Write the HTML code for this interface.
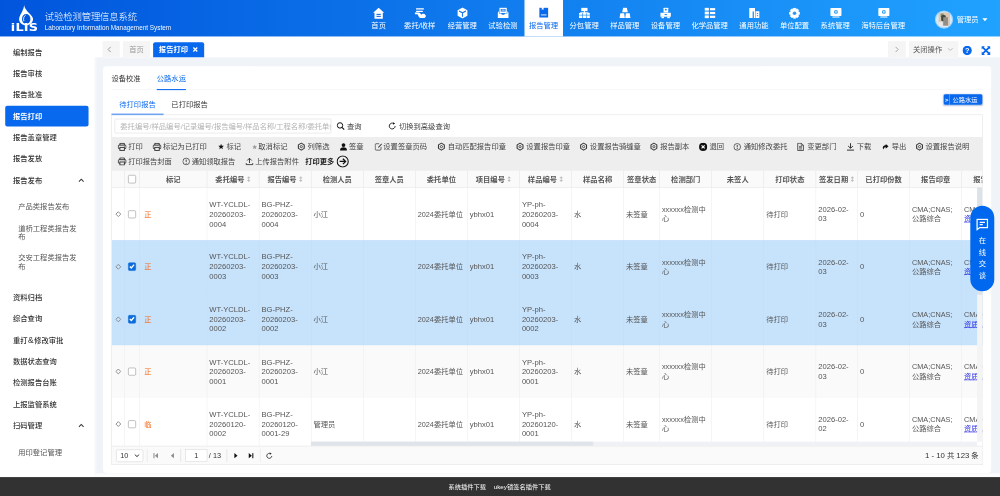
<!DOCTYPE html>
<html lang="zh-CN"><head><meta charset="utf-8"><title>试验检测管理信息系统</title>
<style>
*{box-sizing:border-box;margin:0;padding:0}
html,body{width:1000px;height:496px;overflow:hidden;background:#f0f4f9}
body{font-family:"Liberation Sans","Noto Sans CJK SC",sans-serif;font-size:14px;color:#333}
#app{position:absolute;left:0;top:0;width:1920px;height:960px;transform:scale(0.5208333) translateZ(0);transform-origin:0 0;overflow:hidden}
svg{display:block}
/* header */
.hdr{position:absolute;left:0;top:0;width:1920px;height:70px;z-index:3;background:linear-gradient(90deg,#0055dc 0%,#20a2ff 100%)}
.logo{position:absolute;left:20px;top:8px;width:54px;height:56px}
.logo .t{position:absolute;left:-4px;top:32px;width:62px;text-align:center;font-family:"DejaVu Sans","Liberation Sans",sans-serif;font-weight:bold;font-size:23px;line-height:24px;color:#fff;letter-spacing:0.3px;transform:scale(1.07,0.9);transform-origin:50% 100%}
.logo svg{position:absolute;left:0;top:0}
.ttl{position:absolute;left:86px;top:20px;color:#fff;font-size:18px;line-height:24px;white-space:nowrap;letter-spacing:-0.3px;font-weight:300}
.sub{position:absolute;left:86px;top:46px;color:#fff;font-size:12.25px;line-height:16px;white-space:nowrap;opacity:.95}
.nav{position:absolute;left:691px;top:0;height:70px;display:flex}
.ni{height:70px;position:relative;color:#fff;font-size:14px;text-align:center;white-space:nowrap}
.ni .bg{position:absolute;left:2px;right:2px;top:0;bottom:0}
.ni.on .bg{background:#fff}
.ni.on{color:#0868ee}
.ni svg{position:absolute;left:50%;margin-left:-11px;top:14px}
.ni span{position:absolute;left:0;right:0;top:39px;line-height:20px}
.user{position:absolute;left:1795px;top:20px;width:35px;height:35px;border-radius:50%;border:2px solid #9bd2ff;background:#d9ecff;overflow:hidden}
.user i{position:absolute;display:block}
.uname{position:absolute;left:1837px;top:27px;color:#fff;font-size:14px;line-height:20px;white-space:nowrap}
.ucar{position:absolute;left:1886px;top:35px;width:0;height:0;border-left:5px solid transparent;border-right:5px solid transparent;border-top:6px solid #fff}
/* sidebar */
.side{position:absolute;left:0;top:70px;width:180px;height:846px;background:#fff;padding:10px 10px 0 10px;box-shadow:2px 0 5px rgba(255,255,255,.95)}
.si{height:40px;margin-bottom:1px;line-height:40px;padding-left:15px;font-size:14px;font-weight:500;color:#333;border-radius:4px;position:relative;white-space:nowrap}
.si.on{background:#0868ee;color:#fff;font-weight:bold}
.si .chev{position:absolute;left:140px;top:15px}
.sub1{padding:10px 0 19.4px 0}
.ss{min-height:40px;margin-bottom:1px;padding:12px 20px 12px 25px;line-height:16px;font-size:14px;color:#555;font-weight:normal}
/* tabs bar */
.tbar{position:absolute;left:180px;top:70px;width:1740px;height:40px;background:#fff}
.tb{position:absolute;top:9px;height:31px;line-height:31px;text-align:center;background:#f5f5f5;color:#999;font-size:14px;white-space:nowrap}
.tb.on{background:#0868ee;color:#fff;font-weight:bold;border-radius:4px 4px 0 0}
/* panel */
.panel{position:absolute;left:198px;top:127px;width:1705px;height:781px;background:#fff;border-radius:6px}
.t1{position:absolute;left:16px;right:16px;top:0;height:46px;border-bottom:1px solid #eef0f3}
.t1 div{position:absolute;top:12px;line-height:22px;font-size:14px;color:#333;white-space:nowrap}
.t1 div.on{color:#0868ee}
.t1 i{position:absolute;left:87px;width:56px;top:44px;height:2px;background:#0868ee}
.t2{position:absolute;left:16px;right:16px;top:54px;height:40px;border-bottom:1px solid #dcdfe4}
.t2 div{position:absolute;top:0;height:40px;line-height:40px;width:100px;text-align:center;font-size:14px;color:#333}
.t2 div.on{color:#0868ee;border-bottom:3px solid #6ea3f2}
.corner{position:absolute;left:1614px;top:54px;width:74px;height:20px;box-shadow:0 1px 3px rgba(0,60,160,.3);background:#0868ee;border-radius:3px;color:#fff;font-size:12px;line-height:20px;white-space:nowrap}
.corner b{position:absolute;left:0;top:0;width:12px;text-align:center;font-weight:bold;font-size:11px;border-right:1px solid #9fc0f5;height:20px}
.corner span{position:absolute;left:17px;top:0}
.box{position:absolute;left:16px;top:94px;width:1673px;height:671px;border:1px solid #dfdfdf;border-top:none;overflow:hidden}

.hdr,.tbar,.tb,.panel,.foot,.pg,.pg .sel,.pg .inp,.pg .tx,.srch,.tool,.th,.t1,.t2,.box,.sb,.bt,.nav,.ni{box-shadow:0 0 1px rgba(255,255,255,.02)}
/* footer */
.foot{position:absolute;left:0;top:916px;width:1920px;height:44px;background:#323232;color:#fff;font-size:12px;line-height:36px;white-space:nowrap}
.foot span{position:absolute;top:0}
/* chat */
.chat{position:absolute;left:1863px;top:395px;width:46px;height:164px;border-radius:23px;background:#0068ee;color:#fff;font-size:14px;text-align:center}
.chat svg{position:absolute;left:11px;top:24px}
.chat span{position:absolute;left:0;width:46px;line-height:22px}

.srch{position:absolute;left:5px;top:7px;width:416px;height:28px;border:1px solid #d9d9d9;border-radius:2px;background:#fff;overflow:hidden;white-space:nowrap;color:#b3b3b3;font-size:14px;line-height:26px;padding-left:10px}
.sb{position:absolute;top:6px;height:30px;line-height:30px;font-size:14px;color:#444;white-space:nowrap}
.sb svg{position:absolute;left:0;top:7px}
.tool{position:absolute;left:0;top:42px;width:1673px;height:65px;background:#eeeeee}
.bt{position:absolute;height:29px;line-height:29px;font-size:14px;color:#444;white-space:nowrap;padding-left:20px}
.bt svg{position:absolute;left:0;top:6px}
.th{position:absolute;left:0;top:107px;height:32px;background:#fafafa;border-bottom:1px solid #e2e2e2}
.th div{position:absolute;top:0;height:32px;line-height:33.4px;text-align:center;font-size:14px;font-weight:bold;color:#555;border-right:1px solid #e2e2e2;white-space:nowrap;overflow:hidden}
.th div svg{display:inline-block;vertical-align:-1px;margin-left:3px}
.row{position:absolute;left:0;width:1673px;height:101.5px;background:#fff}
.row.alt{background:#fafafa}
.row.sel{background:#c7e3fc}
.c{position:absolute;top:0;height:100%;border-right:1px solid #ececec;padding:0 4px 0 4px;font-size:14px;line-height:18.4px;color:#555;display:flex;align-items:center;overflow:hidden}
.row.sel .c{border-right-color:#c0ddf6}
.c p{width:100%}
.c p.l{font-size:14.6px}
.ck{width:15.6px;height:15.6px;border:1.5px solid #8c8c8c;border-radius:2.6px;background:#fff}
.ck.on{background:#0c6cd9;border-color:#0c6cd9;position:relative}
.lnk{color:#2b2ee6;text-decoration:underline}
.pg{position:absolute;left:0;top:635px;width:1673px;height:36px;background:#fafafa;border-top:1px solid #e2e2e2}
.pg .sel{position:absolute;left:8px;top:6px;width:52px;height:24px;border:1px solid #d5d5d5;border-radius:3px;background:#fff;font-size:14px;line-height:22px;padding-left:7px;color:#333}
.pg .sp{position:absolute;top:5px;width:1px;height:25px;background:#dedede;border-right:1px solid #fff;box-sizing:content-box}
.pg .inp{position:absolute;left:141px;top:6px;width:42px;height:24px;border:1px solid #d5d5d5;background:#fff;font-size:14px;line-height:22px;text-align:center;color:#333}
.pg .tx{position:absolute;top:6px;line-height:24px;font-size:14px;color:#333;white-space:nowrap}
.pg svg{position:absolute}
.hs{position:absolute;left:382px;top:627px;width:1279px;height:8px;background:#eff1f7}
.hs i{position:absolute;left:0;top:0;width:542px;height:8px;background:#dfe4ea}
.vs{position:absolute;left:1661px;top:139px;width:11px;height:488px;background:#f4f4f4}
.vs i{position:absolute;left:0;top:0;width:11px;height:206px;background:#dde2e8}
</style></head><body><div id="app">
<div class="hdr">
<div class="logo"><svg width="54" height="56" viewBox="0 0 54 56"><path d="M26.3 1.4 C26.8 6 29.4 9.4 32 12.9 C36.4 18.4 43.4 22.4 43.4 28.6 C43.4 35.6 37.5 40.6 30 40.6 C22.5 40.6 16.6 35.6 16.6 28.6 C16.6 22.4 21.4 17.6 23 12.9 C24.6 9 25.9 6 26.3 1.4 Z" fill="#fff"/><ellipse cx="30.3" cy="28.6" rx="8.1" ry="9.6" fill="#0257dd"/><path d="M25.6 32 C24.4 27.4 25.6 23.4 28.6 21.6" stroke="#fff" stroke-width="1.7" fill="none" stroke-linecap="round"/></svg><div class="t">iLIS</div></div>
<div class="ttl">试验检测管理信息系统</div>
<div class="sub">Laboratory Information Management System</div>
<div class="nav">
<div class="ni" style="width:72px"><div class="bg"></div><svg width="22" height="23" viewBox="0 0 22 23" style="top:13.5px"><path d="M11 0.8 L21.6 10.6 H19 V21.8 H3 V10.6 H0.4 Z" fill="#fff"/><rect x="6.8" y="12.6" width="8.4" height="2" fill="#0966e3"/><rect x="6.8" y="16.4" width="8.4" height="2" fill="#0966e3"/></svg><span>首页</span></div>
<div class="ni" style="width:85.6px"><div class="bg"></div><svg width="24" height="22" viewBox="0 0 24 22"><rect x="3.6" y="1.6" width="15.4" height="2.6" rx="1" fill="#fff"/><rect x="3.6" y="6.4" width="13.6" height="2.4" rx="1" fill="#fff"/><path d="M1.6 10.2 H8 C10.4 10.2 11.6 11 12.6 12.6 L13.8 14.4 C14.6 12.8 16.2 12 18.2 12.4 C20.8 13 22.9 14.9 22.6 17.1 C22.3 19.5 20 20.6 17.5 20.6 H13.4 C10.8 20.6 9.6 19.2 8.6 17.2 L7.2 14.4 C6.7 13.5 6.2 13.3 5.2 13.3 H1.6 Z" fill="#fff"/></svg><span>委托/收样</span></div>
<div class="ni" style="width:78px"><div class="bg"></div><svg width="22" height="22" viewBox="0 0 22 22"><path d="M11 0.5 L20.4 5.6 V16.4 L11 21.5 L1.6 16.4 V5.6 Z" fill="#fff"/><path d="M5.2 7.4 L11 10.6 L16.8 7.4 M11 10.6 V17.4" stroke="#1474e9" stroke-width="2.2" fill="none" stroke-linecap="round"/></svg><span>经营管理</span></div>
<div class="ni" style="width:78px"><div class="bg"></div><svg width="22" height="22" viewBox="0 0 22 22"><path d="M4 1 H18 V11 H4 Z" fill="#fff"/><rect x="6.4" y="3.2" width="9.2" height="5" fill="#1979ea"/><rect x="8" y="4.6" width="6" height="1.6" fill="#fff"/><path d="M0.6 10.6 L3 7 V12 H7.4 C7.4 15.4 14.6 15.4 14.6 12 H19 V7 L21.4 10.6 V20.4 H0.6 Z" fill="#fff"/></svg><span>试验检测</span></div>
<div class="ni on" style="width:78px"><div class="bg"></div><svg width="22" height="22" viewBox="0 0 22 22"><path d="M2.6 0.8 H7.2 V5 L8.9 3.8 L10.6 5 V0.8 H19.4 V19.6 H2.6 Z" fill="#0868ee"/><rect x="5.6" y="13.8" width="10.8" height="1.7" fill="#fff"/></svg><span>报告管理</span></div>
<div class="ni" style="width:78px"><div class="bg"></div><svg width="22" height="22" viewBox="0 0 22 22"><rect x="5" y="1" width="12" height="6.4" fill="#fff"/><rect x="10" y="7" width="2" height="4" fill="#fff"/><rect x="3" y="9.6" width="16" height="1.8" fill="#fff"/><rect x="0.6" y="11" width="6.2" height="9.6" fill="#fff"/><rect x="7.9" y="11" width="6.2" height="9.6" fill="#fff"/><rect x="15.2" y="11" width="6.2" height="9.6" fill="#fff"/><rect x="0.6" y="14.4" width="21" height="1.2" fill="#1e84ee"/></svg><span>分包管理</span></div>
<div class="ni" style="width:78px"><div class="bg"></div><svg width="22" height="22" viewBox="0 0 22 22"><path d="M7.4 1 H14.6 L16.4 9.6 H5.6 Z" fill="#fff"/><path d="M2 11.2 H9.4 L10.6 20.6 H0.4 Z M12.6 11.2 H20 L21.6 20.6 H11.4 Z" fill="#fff"/></svg><span>样品管理</span></div>
<div class="ni" style="width:78px"><div class="bg"></div><svg width="22" height="22" viewBox="0 0 22 22"><rect x="7" y="1" width="9" height="9" rx="1" fill="#fff"/><rect x="9.6" y="3" width="3.6" height="3" fill="#238cf0"/><path d="M1 10.4 H21 V18 H1 Z" fill="#fff"/><rect x="3" y="18" width="5" height="3" fill="#fff"/><rect x="14" y="18" width="5" height="3" fill="#fff"/><rect x="9" y="13" width="5" height="2" fill="#238cf0"/></svg><span>设备管理</span></div>
<div class="ni" style="width:92px"><div class="bg"></div><svg width="22" height="22" viewBox="0 0 22 22"><rect x="1" y="1" width="8" height="5.4" fill="#fff"/><rect x="11" y="1.6" width="10.4" height="4.2" fill="#fff"/><rect x="1" y="8.3" width="8" height="5.4" fill="#fff"/><rect x="11" y="8.9" width="10.4" height="4.2" fill="#fff"/><rect x="1" y="15.6" width="8" height="5.4" fill="#fff"/><rect x="11" y="16.2" width="10.4" height="4.2" fill="#fff"/></svg><span>化学品管理</span></div>
<div class="ni" style="width:78px"><div class="bg"></div><svg width="22" height="22" viewBox="0 0 22 22"><path d="M1.6 1.4 H12.6 V20.8 H1.6 Z" fill="#fff"/><path d="M13.6 7.4 H21 V20.8 H13.6 Z" fill="#fff"/><rect x="8" y="8" width="2.6" height="12.8" fill="#2996f4"/><rect x="16" y="11" width="2.6" height="2" fill="#2996f4"/><rect x="16" y="15" width="2.6" height="2" fill="#2996f4"/></svg><span>通用功能</span></div>
<div class="ni" style="width:78px"><div class="bg"></div><svg width="21" height="21" viewBox="0 0 22 22" style="margin-left:-10.5px;top:14.5px"><path d="M9 0.6 H13 L13.8 3.4 L16.4 2 L19.4 5 L18 7.8 L21.2 9 V13 L18 14.2 L19.4 17 L16.4 20 L13.8 18.6 L13 21.4 H9 L8.2 18.6 L5.6 20 L2.6 17 L4 14.2 L0.8 13 V9 L4 7.8 L2.6 5 L5.6 2 L8.2 3.4 Z" fill="#fff" stroke="#fff" stroke-width="1.4" stroke-linejoin="round"/><circle cx="11" cy="11" r="3.6" fill="#2b9af6"/></svg><span>单位配置</span></div>
<div class="ni" style="width:78px"><div class="bg"></div><svg width="24" height="22" viewBox="0 0 24 22"><rect x="1.4" y="1.4" width="21.2" height="15.4" rx="1.4" fill="#fff"/><circle cx="12" cy="8.8" r="3.7" fill="#2e9ef8"/><circle cx="12" cy="8.8" r="1.5" fill="#fff"/><rect x="5" y="17.8" width="14" height="2" rx="0.6" fill="#fff"/></svg><span>系统管理</span></div>
<div class="ni" style="width:106px"><div class="bg"></div><svg width="24" height="22" viewBox="0 0 24 22"><rect x="1.4" y="1.4" width="21.2" height="15.4" rx="1.4" fill="#fff"/><circle cx="12" cy="8.8" r="3.7" fill="#2e9ef8"/><circle cx="12" cy="8.8" r="1.5" fill="#fff"/><rect x="5" y="17.8" width="14" height="2" rx="0.6" fill="#fff"/></svg><span>海特后台管理</span></div>
</div>
<div class="user"><i style="left:4.5px;top:2px;width:22px;height:26px;background:#dac8b0"></i><i style="left:9px;top:4px;width:6px;height:7px;background:#7f927b"></i><i style="left:10px;top:7px;width:9px;height:12px;background:#414a40;border-radius:3px"></i><i style="left:14px;top:11px;width:9px;height:16px;background:#918d88"></i><i style="left:5px;top:20px;width:8px;height:8px;background:#e6eaee"></i></div><div class="uname">管理员</div><div class="ucar"></div>
</div>
<div class="side">
<div class="si">编制报告</div>
<div class="si">报告审核</div>
<div class="si">报告批准</div>
<div class="si on">报告打印</div>
<div class="si">报告盖章管理</div>
<div class="si">报告发放</div>
<div class="si">报告发布<svg class="chev" width="12" height="10" viewBox="0 0 12 10"><path d="M1.5 7.5 L6 3 L10.5 7.5" stroke="#333" stroke-width="2" fill="none"/></svg></div>
<div class="sub1"><div class="ss">产品类报告发布</div><div class="ss">道桥工程类报告发布</div><div class="ss">交安工程类报告发布</div></div>
<div class="si">资料归档</div>
<div class="si">综合查询</div>
<div class="si">重打<span style="font-size:16px;padding:0 1px">&amp;</span>修改审批</div>
<div class="si">数据状态查询</div>
<div class="si">检测报告台账</div>
<div class="si">上报监管系统</div>
<div class="si">扫码管理<svg class="chev" width="12" height="10" viewBox="0 0 12 10"><path d="M1.5 7.5 L6 3 L10.5 7.5" stroke="#333" stroke-width="2" fill="none"/></svg></div>
<div class="sub1"><div class="ss">用印登记管理</div></div>
</div>
<div class="tbar">
<div class="tb" style="left:17px;width:33px"><svg style="margin:10px 0 0 9px" width="8" height="12" viewBox="0 0 8 12"><path d="M6.5 1 L1.5 6 L6.5 11" stroke="#8a8a8a" stroke-width="1.7" fill="none"/></svg></div>
<div class="tb" style="left:56px;width:52px">首页</div>
<div class="tb on" style="left:114px;width:98px;top:10.5px;height:29.5px;line-height:28px"><span style="position:absolute;left:11px;top:0">报告打印</span><svg style="position:absolute;left:76px;top:9.5px" width="10" height="10" viewBox="0 0 10 10"><path d="M1.2 1.2 L8.8 8.8 M8.8 1.2 L1.2 8.8" stroke="#fff" stroke-width="2.6"/></svg></div>
<div class="tb" style="left:1525px;width:34px"><svg style="margin:10px auto 0" width="8" height="12" viewBox="0 0 8 12"><path d="M1.5 1 L6.5 6 L1.5 11" stroke="#999" stroke-width="1.6" fill="none"/></svg></div>
<div class="tb" style="left:1565px;width:95px;color:#555"><span style="position:absolute;left:8px;top:0">关闭操作</span><svg style="position:absolute;left:74px;top:12px" width="11" height="8" viewBox="0 0 11 8"><path d="M1 1.5 L5.5 6 L10 1.5" stroke="#aaa" stroke-width="1.4" fill="none"/></svg></div>
<svg style="position:absolute;left:1668px;top:17.5px" width="18" height="18" viewBox="0 0 18 18"><circle cx="9" cy="9" r="9" fill="#0868ee"/><text x="9" y="13.8" text-anchor="middle" font-family="Liberation Sans,sans-serif" font-weight="bold" font-size="14" fill="#fff">?</text></svg>
<svg style="position:absolute;left:1704px;top:17.5px" width="18" height="18" viewBox="0 0 18 18"><path d="M0.6 0.6 H7 L5 2.6 L9 6.6 L13 2.6 L11 0.6 H17.4 V7 L15.4 5 L11.4 9 L15.4 13 L17.4 11 V17.4 H11 L13 15.4 L9 11.4 L5 15.4 L7 17.4 H0.6 V11 L2.6 13 L6.6 9 L2.6 5 L0.6 7 Z" fill="#0868ee"/></svg>
</div>
<div class="panel">
<div class="t1"><div style="left:0">设备校准</div><div class="on" style="left:87px">公路水运</div><i></i></div>
<div class="t2"><div class="on" style="left:0">待打印报告</div><div style="left:100px">已打印报告</div></div>
<div class="corner"><b>&gt;</b><span>公路水运</span></div>
<div class="box"><div class="srch">委托编号/样品编号/记录编号/报告编号/样品名称/工程名称/委托单位/检测人员</div>
<div class="sb" style="left:431px;padding-left:20px"><svg width="16" height="16" viewBox="0 0 16 16"><circle cx="6.8" cy="6.8" r="5.2" fill="none" stroke="#111" stroke-width="1.9"/><path d="M10.6 10.6 L15 15" stroke="#111" stroke-width="2.2"/></svg>查询</div>
<div class="sb" style="left:530px;padding-left:21px"><svg width="16" height="16" viewBox="0 0 16 16"><path d="M13.6 8 A5.6 5.6 0 1 1 11.2 3.4" fill="none" stroke="#111" stroke-width="1.7"/><path d="M9.4 0.6 L13.6 3 L9.8 5.6 Z" fill="#111"/></svg>切换到高级查询</div>
<div class="tool">
<div class="bt" style="left:11px;top:4.5px;padding-left:20px;"><svg width="17" height="16" viewBox="0 0 17 16"><path d="M4.2 4.6 V1.2 H12.8 V4.6" fill="none" stroke="#333" stroke-width="1.8"/><rect x="1" y="4.6" width="15" height="6.8" rx="1.8" fill="none" stroke="#333" stroke-width="1.9"/><rect x="4.2" y="9" width="8.6" height="5.8" fill="#eeeeee" stroke="#333" stroke-width="1.8"/><circle cx="13.3" cy="7" r="0.9" fill="#333"/></svg>打印</div>
<div class="bt" style="left:78px;top:4.5px;padding-left:20px;"><svg width="17" height="16" viewBox="0 0 17 16"><path d="M4.2 4.6 V1.2 H12.8 V4.6" fill="none" stroke="#333" stroke-width="1.8"/><rect x="1" y="4.6" width="15" height="6.8" rx="1.8" fill="none" stroke="#333" stroke-width="1.9"/><rect x="4.2" y="9" width="8.6" height="5.8" fill="#eeeeee" stroke="#333" stroke-width="1.8"/><circle cx="13.3" cy="7" r="0.9" fill="#333"/></svg>标记为已打印</div>
<div class="bt" style="left:203px;top:4.5px;padding-left:17px;"><svg width="13" height="14.9" viewBox="0 0 14 16" style="top:6.6px"><path d="M7 2.2 L8.6 6.2 L12.8 6.5 L9.6 9.2 L10.6 13.4 L7 11.1 L3.4 13.4 L4.4 9.2 L1.2 6.5 L5.4 6.2 Z" fill="#111"/></svg>标记</div>
<div class="bt" style="left:268px;top:4.5px;padding-left:13px;"><svg width="12" height="16" viewBox="0 0 12 16"><path d="M6 3.4 L7.3 6.6 L10.8 6.9 L8.1 9.1 L9 12.6 L6 10.7 L3 12.6 L3.9 9.1 L1.2 6.9 L4.7 6.6 Z" fill="#9a9a9a"/></svg>取消标记</div>
<div class="bt" style="left:355.5px;top:4.5px;padding-left:20px;"><svg width="17" height="17" viewBox="0 0 16 16" style="left:-0.5px;top:5.5px"><path d="M8.00 1.70 L2.72 4.85 L2.72 11.15 L8.00 14.30 L13.28 11.15 L13.28 4.85 Z" fill="none" stroke="#3a3a3a" stroke-width="2" stroke-linejoin="round"/><circle cx="8" cy="8" r="2" fill="none" stroke="#3a3a3a" stroke-width="1.5"/></svg>列筛选</div>
<div class="bt" style="left:437px;top:4.5px;padding-left:18px;"><svg width="15" height="16" viewBox="0 0 15 16"><circle cx="7.5" cy="4.6" r="3.6" fill="#111"/><path d="M0.8 15 C0.8 10.6 3.4 8.8 7.5 8.8 C11.6 8.8 14.2 10.6 14.2 15 Z" fill="#111"/></svg>签章</div>
<div class="bt" style="left:504px;top:4.5px;padding-left:17px;"><svg width="15" height="16" viewBox="0 0 15 16"><path d="M9 2 H3 C2 2 1.4 2.6 1.4 3.6 V12.6 C1.4 13.6 2 14.2 3 14.2 H11 C12 14.2 12.6 13.6 12.6 12.6 V8" fill="none" stroke="#333" stroke-width="1.4"/><path d="M13.4 1.6 L7.4 7.8 L6.6 9.8 L8.6 9 L14.4 2.8 Z" fill="#333"/></svg>设置签章页码</div>
<div class="bt" style="left:624.5px;top:4.5px;padding-left:20px;"><svg width="17" height="17" viewBox="0 0 16 16" style="left:-0.5px;top:5.5px"><path d="M8.00 1.70 L2.72 4.85 L2.72 11.15 L8.00 14.30 L13.28 11.15 L13.28 4.85 Z" fill="none" stroke="#3a3a3a" stroke-width="2" stroke-linejoin="round"/><circle cx="8" cy="8" r="2" fill="none" stroke="#3a3a3a" stroke-width="1.5"/></svg>自动匹配报告印章</div>
<div class="bt" style="left:775.5px;top:4.5px;padding-left:20px;"><svg width="17" height="17" viewBox="0 0 16 16" style="left:-0.5px;top:5.5px"><path d="M8.00 1.70 L2.72 4.85 L2.72 11.15 L8.00 14.30 L13.28 11.15 L13.28 4.85 Z" fill="none" stroke="#3a3a3a" stroke-width="2" stroke-linejoin="round"/><circle cx="8" cy="8" r="2" fill="none" stroke="#3a3a3a" stroke-width="1.5"/></svg>设置报告印章</div>
<div class="bt" style="left:897.5px;top:4.5px;padding-left:20px;"><svg width="17" height="17" viewBox="0 0 16 16" style="left:-0.5px;top:5.5px"><path d="M8.00 1.70 L2.72 4.85 L2.72 11.15 L8.00 14.30 L13.28 11.15 L13.28 4.85 Z" fill="none" stroke="#3a3a3a" stroke-width="2" stroke-linejoin="round"/><circle cx="8" cy="8" r="2" fill="none" stroke="#3a3a3a" stroke-width="1.5"/></svg>设置报告骑缝章</div>
<div class="bt" style="left:1032.5px;top:4.5px;padding-left:20px;"><svg width="17" height="17" viewBox="0 0 16 16" style="left:-0.5px;top:5.5px"><path d="M8.00 1.70 L2.72 4.85 L2.72 11.15 L8.00 14.30 L13.28 11.15 L13.28 4.85 Z" fill="none" stroke="#3a3a3a" stroke-width="2" stroke-linejoin="round"/><circle cx="8" cy="8" r="2" fill="none" stroke="#3a3a3a" stroke-width="1.5"/></svg>报告副本</div>
<div class="bt" style="left:1127px;top:4.5px;padding-left:20px;"><svg width="16" height="16" viewBox="0 0 16 16"><circle cx="8" cy="8" r="7.8" fill="#111"/><path d="M5 5 L11 11 M11 5 L5 11" stroke="#fff" stroke-width="2.2"/></svg>退回</div>
<div class="bt" style="left:1193px;top:4.5px;padding-left:20px;"><svg width="15" height="16" viewBox="0 0 15 16"><circle cx="7.5" cy="8" r="6.4" fill="none" stroke="#333" stroke-width="1.4"/><path d="M7.5 4.4 V9" stroke="#333" stroke-width="1.7"/><circle cx="7.5" cy="11.3" r="1" fill="#333"/></svg>通知修改委托</div>
<div class="bt" style="left:1315px;top:4.5px;padding-left:20px;"><svg width="14" height="16" viewBox="0 0 14 16"><path d="M1.6 1 H8.6 L12.6 5 V15 H1.6 Z" fill="none" stroke="#333" stroke-width="1.5" stroke-linejoin="round"/><path d="M4 7 H10 M4 9.6 H10 M4 12.2 H10" stroke="#333" stroke-width="1.3"/><path d="M8.4 1 V5.2 H12.6" fill="none" stroke="#333" stroke-width="1.2"/></svg>变更部门</div>
<div class="bt" style="left:1410px;top:4.5px;padding-left:20px;"><svg width="16" height="16" viewBox="0 0 16 16"><path d="M8 1 V10.2 M3.4 6.2 L8 10.8 L12.6 6.2" fill="none" stroke="#333" stroke-width="1.9"/><path d="M1.2 14.2 H14.8" stroke="#333" stroke-width="1.9"/></svg>下载</div>
<div class="bt" style="left:1477px;top:4.5px;padding-left:20px;"><svg width="15" height="16" viewBox="0 0 15 16"><path d="M8.6 2.6 L14 7 L8.6 11.4 V8.9 C6.4 8.9 4.8 10 4.4 13 C1.4 9.6 3.4 5.2 8.6 5.1 Z" fill="#111"/></svg>导出</div>
<div class="bt" style="left:1542px;top:4.5px;padding-left:20px;"><svg width="17" height="17" viewBox="0 0 16 16" style="left:-0.5px;top:5.5px"><path d="M8.00 1.70 L2.72 4.85 L2.72 11.15 L8.00 14.30 L13.28 11.15 L13.28 4.85 Z" fill="none" stroke="#3a3a3a" stroke-width="2" stroke-linejoin="round"/><circle cx="8" cy="8" r="2" fill="none" stroke="#3a3a3a" stroke-width="1.5"/></svg>设置报告说明</div>
<div class="bt" style="left:11px;top:33.2px;padding-left:20px;"><svg width="17" height="16" viewBox="0 0 17 16"><path d="M4.2 4.6 V1.2 H12.8 V4.6" fill="none" stroke="#333" stroke-width="1.8"/><rect x="1" y="4.6" width="15" height="6.8" rx="1.8" fill="none" stroke="#333" stroke-width="1.9"/><rect x="4.2" y="9" width="8.6" height="5.8" fill="#eeeeee" stroke="#333" stroke-width="1.8"/><circle cx="13.3" cy="7" r="0.9" fill="#333"/></svg>打印报告封面</div>
<div class="bt" style="left:135px;top:33.2px;padding-left:18px;"><svg width="15" height="16" viewBox="0 0 15 16"><circle cx="7.5" cy="8" r="6.4" fill="none" stroke="#333" stroke-width="1.4"/><path d="M7.5 4.4 V9" stroke="#333" stroke-width="1.7"/><circle cx="7.5" cy="11.3" r="1" fill="#333"/></svg>通知领取报告</div>
<div class="bt" style="left:256px;top:33.2px;padding-left:19px;"><svg width="16" height="16" viewBox="0 0 16 16"><path d="M8 11 V2 M3.6 6.2 L8 1.8 L12.4 6.2" fill="none" stroke="#333" stroke-width="1.8"/><path d="M1.6 11 V14.2 H14.4 V11" fill="none" stroke="#333" stroke-width="1.8"/></svg>上传报告附件</div>
<div class="bt" style="left:371px;top:33px;padding-left:0;font-weight:bold;color:#222">打印更多</div>
<svg style="position:absolute;left:430.5px;top:35px" width="24" height="24" viewBox="0 0 24 24"><circle cx="12" cy="12" r="10.6" fill="none" stroke="#111" stroke-width="2.1"/><path d="M6 12 H17 M12.4 6.8 L17.6 12 L12.4 17.2" fill="none" stroke="#111" stroke-width="2.4"/></svg>
</div>
<div class="th" style="width:1673px">
<div style="left:0px;width:25px"></div>
<div style="left:25px;width:28px"><span class="ck" style="display:block;margin:8px auto 0"></span></div>
<div style="left:53px;width:130px">标记</div>
<div style="left:183px;width:100px">委托编号<svg width="9" height="12" viewBox="0 0 9 12"><path d="M4.5 0.4 L8 4.2 H5.3 V7.8 H8 L4.5 11.6 L1 7.8 H3.7 V4.2 H1 Z" fill="#bdbdbd"/></svg></div>
<div style="left:283px;width:100px">报告编号<svg width="9" height="12" viewBox="0 0 9 12"><path d="M4.5 0.4 L8 4.2 H5.3 V7.8 H8 L4.5 11.6 L1 7.8 H3.7 V4.2 H1 Z" fill="#bdbdbd"/></svg></div>
<div style="left:383px;width:100px">检测人员</div>
<div style="left:483px;width:100px">签章人员</div>
<div style="left:583px;width:100px">委托单位</div>
<div style="left:683px;width:100px">项目编号<svg width="9" height="12" viewBox="0 0 9 12"><path d="M4.5 0.4 L8 4.2 H5.3 V7.8 H8 L4.5 11.6 L1 7.8 H3.7 V4.2 H1 Z" fill="#bdbdbd"/></svg></div>
<div style="left:783px;width:100px">样品编号<svg width="9" height="12" viewBox="0 0 9 12"><path d="M4.5 0.4 L8 4.2 H5.3 V7.8 H8 L4.5 11.6 L1 7.8 H3.7 V4.2 H1 Z" fill="#bdbdbd"/></svg></div>
<div style="left:883px;width:100px">样品名称</div>
<div style="left:983px;width:69px">签章状态</div>
<div style="left:1052px;width:100px">检测部门</div>
<div style="left:1152px;width:100px">未签人</div>
<div style="left:1252px;width:100px">打印状态</div>
<div style="left:1352px;width:80px">签发日期<svg width="9" height="12" viewBox="0 0 9 12"><path d="M4.5 0.4 L8 4.2 H5.3 V7.8 H8 L4.5 11.6 L1 7.8 H3.7 V4.2 H1 Z" fill="#bdbdbd"/></svg></div>
<div style="left:1432px;width:100px">已打印份数</div>
<div style="left:1532px;width:100px">报告印章</div>
<div style="left:1632px;width:100px">报告类型</div>
</div>
<div class="row " style="top:139.6px">
<div class="c" style="left:0px;width:25px;padding:0;justify-content:center"><svg width="12.4" height="12.4" viewBox="0 0 13 13" style="margin:0 auto"><path d="M6.5 1.6 L11.4 6.5 L6.5 11.4 L1.6 6.5 Z" fill="none" stroke="#888" stroke-width="1.9" stroke-linejoin="miter"/></svg></div>
<div class="c" style="left:25px;width:28px;padding:0;justify-content:center"><span class="ck"></span></div>
<div class="c" style="left:53px;width:130px;"><p style="color:#f26a1b;padding-left:5px">正</p></div>
<div class="c" style="left:183px;width:100px;"><p class="l">WT-YCLDL-20260203-0004</p></div>
<div class="c" style="left:283px;width:100px;"><p class="l">BG-PHZ-20260203-0004</p></div>
<div class="c" style="left:383px;width:100px;"><p>小江</p></div>
<div class="c" style="left:483px;width:100px;"></div>
<div class="c" style="left:583px;width:100px;"><p style="white-space:nowrap">2024委托单位</p></div>
<div class="c" style="left:683px;width:100px;"><p class="l">ybhx01</p></div>
<div class="c" style="left:783px;width:100px;"><p class="l">YP-ph-20260203-0004</p></div>
<div class="c" style="left:883px;width:100px;"><p>水</p></div>
<div class="c" style="left:983px;width:69px;"><p>未签章</p></div>
<div class="c" style="left:1052px;width:100px;"><p>xxxxxx检测中心</p></div>
<div class="c" style="left:1152px;width:100px;"></div>
<div class="c" style="left:1252px;width:100px;"><p>待打印</p></div>
<div class="c" style="left:1352px;width:80px;"><p class="l">2026-02-03</p></div>
<div class="c" style="left:1432px;width:100px;"><p class="l">0</p></div>
<div class="c" style="left:1532px;width:100px;"><p>CMA;CNAS;<br>公路综合</p></div>
<div class="c" style="left:1632px;width:100px;"><p style="white-space:nowrap">CMA;CNAS;<br><span class="lnk">资质认定</span></p></div>
</div>
<div class="row sel" style="top:240.35px">
<div class="c" style="left:0px;width:25px;padding:0;justify-content:center"><svg width="12.4" height="12.4" viewBox="0 0 13 13" style="margin:0 auto"><path d="M6.5 1.6 L11.4 6.5 L6.5 11.4 L1.6 6.5 Z" fill="none" stroke="#888" stroke-width="1.9" stroke-linejoin="miter"/></svg></div>
<div class="c" style="left:25px;width:28px;padding:0;justify-content:center"><span class="ck on"><svg width="12.6" height="12.6" viewBox="0 0 12 12" style="position:absolute;left:0;top:0"><path d="M2.2 6.2 L4.9 8.9 L9.9 3" fill="none" stroke="#fff" stroke-width="2.5"/></svg></span></div>
<div class="c" style="left:53px;width:130px;"><p style="color:#f26a1b;padding-left:5px">正</p></div>
<div class="c" style="left:183px;width:100px;"><p class="l">WT-YCLDL-20260203-0003</p></div>
<div class="c" style="left:283px;width:100px;"><p class="l">BG-PHZ-20260203-0003</p></div>
<div class="c" style="left:383px;width:100px;"><p>小江</p></div>
<div class="c" style="left:483px;width:100px;"></div>
<div class="c" style="left:583px;width:100px;"><p style="white-space:nowrap">2024委托单位</p></div>
<div class="c" style="left:683px;width:100px;"><p class="l">ybhx01</p></div>
<div class="c" style="left:783px;width:100px;"><p class="l">YP-ph-20260203-0003</p></div>
<div class="c" style="left:883px;width:100px;"><p>水</p></div>
<div class="c" style="left:983px;width:69px;"><p>未签章</p></div>
<div class="c" style="left:1052px;width:100px;"><p>xxxxxx检测中心</p></div>
<div class="c" style="left:1152px;width:100px;"></div>
<div class="c" style="left:1252px;width:100px;"><p>待打印</p></div>
<div class="c" style="left:1352px;width:80px;"><p class="l">2026-02-03</p></div>
<div class="c" style="left:1432px;width:100px;"><p class="l">0</p></div>
<div class="c" style="left:1532px;width:100px;"><p>CMA;CNAS;<br>公路综合</p></div>
<div class="c" style="left:1632px;width:100px;"><p style="white-space:nowrap">CMA;CNAS;<br><span class="lnk">资质认定</span></p></div>
</div>
<div class="row sel" style="top:341.1px">
<div class="c" style="left:0px;width:25px;padding:0;justify-content:center"><svg width="12.4" height="12.4" viewBox="0 0 13 13" style="margin:0 auto"><path d="M6.5 1.6 L11.4 6.5 L6.5 11.4 L1.6 6.5 Z" fill="none" stroke="#888" stroke-width="1.9" stroke-linejoin="miter"/></svg></div>
<div class="c" style="left:25px;width:28px;padding:0;justify-content:center"><span class="ck on"><svg width="12.6" height="12.6" viewBox="0 0 12 12" style="position:absolute;left:0;top:0"><path d="M2.2 6.2 L4.9 8.9 L9.9 3" fill="none" stroke="#fff" stroke-width="2.5"/></svg></span></div>
<div class="c" style="left:53px;width:130px;"><p style="color:#f26a1b;padding-left:5px">正</p></div>
<div class="c" style="left:183px;width:100px;"><p class="l">WT-YCLDL-20260203-0002</p></div>
<div class="c" style="left:283px;width:100px;"><p class="l">BG-PHZ-20260203-0002</p></div>
<div class="c" style="left:383px;width:100px;"><p>小江</p></div>
<div class="c" style="left:483px;width:100px;"></div>
<div class="c" style="left:583px;width:100px;"><p style="white-space:nowrap">2024委托单位</p></div>
<div class="c" style="left:683px;width:100px;"><p class="l">ybhx01</p></div>
<div class="c" style="left:783px;width:100px;"><p class="l">YP-ph-20260203-0002</p></div>
<div class="c" style="left:883px;width:100px;"><p>水</p></div>
<div class="c" style="left:983px;width:69px;"><p>未签章</p></div>
<div class="c" style="left:1052px;width:100px;"><p>xxxxxx检测中心</p></div>
<div class="c" style="left:1152px;width:100px;"></div>
<div class="c" style="left:1252px;width:100px;"><p>待打印</p></div>
<div class="c" style="left:1352px;width:80px;"><p class="l">2026-02-03</p></div>
<div class="c" style="left:1432px;width:100px;"><p class="l">0</p></div>
<div class="c" style="left:1532px;width:100px;"><p>CMA;CNAS;<br>公路综合</p></div>
<div class="c" style="left:1632px;width:100px;"><p style="white-space:nowrap">CMA;CNAS;<br><span class="lnk">资质认定</span></p></div>
</div>
<div class="row alt" style="top:441.85px">
<div class="c" style="left:0px;width:25px;padding:0;justify-content:center"><svg width="12.4" height="12.4" viewBox="0 0 13 13" style="margin:0 auto"><path d="M6.5 1.6 L11.4 6.5 L6.5 11.4 L1.6 6.5 Z" fill="none" stroke="#888" stroke-width="1.9" stroke-linejoin="miter"/></svg></div>
<div class="c" style="left:25px;width:28px;padding:0;justify-content:center"><span class="ck"></span></div>
<div class="c" style="left:53px;width:130px;"><p style="color:#f26a1b;padding-left:5px">正</p></div>
<div class="c" style="left:183px;width:100px;"><p class="l">WT-YCLDL-20260203-0001</p></div>
<div class="c" style="left:283px;width:100px;"><p class="l">BG-PHZ-20260203-0001</p></div>
<div class="c" style="left:383px;width:100px;"><p>小江</p></div>
<div class="c" style="left:483px;width:100px;"></div>
<div class="c" style="left:583px;width:100px;"><p style="white-space:nowrap">2024委托单位</p></div>
<div class="c" style="left:683px;width:100px;"><p class="l">ybhx01</p></div>
<div class="c" style="left:783px;width:100px;"><p class="l">YP-ph-20260203-0001</p></div>
<div class="c" style="left:883px;width:100px;"><p>水</p></div>
<div class="c" style="left:983px;width:69px;"><p>未签章</p></div>
<div class="c" style="left:1052px;width:100px;"><p>xxxxxx检测中心</p></div>
<div class="c" style="left:1152px;width:100px;"></div>
<div class="c" style="left:1252px;width:100px;"><p>待打印</p></div>
<div class="c" style="left:1352px;width:80px;"><p class="l">2026-02-03</p></div>
<div class="c" style="left:1432px;width:100px;"><p class="l">0</p></div>
<div class="c" style="left:1532px;width:100px;"><p>CMA;CNAS;<br>公路综合</p></div>
<div class="c" style="left:1632px;width:100px;"><p style="white-space:nowrap">CMA;CNAS;<br><span class="lnk">资质认定</span></p></div>
</div>
<div class="row " style="top:542.6px">
<div class="c" style="left:0px;width:25px;padding:0;justify-content:center"><svg width="12.4" height="12.4" viewBox="0 0 13 13" style="margin:0 auto"><path d="M6.5 1.6 L11.4 6.5 L6.5 11.4 L1.6 6.5 Z" fill="none" stroke="#888" stroke-width="1.9" stroke-linejoin="miter"/></svg></div>
<div class="c" style="left:25px;width:28px;padding:0;justify-content:center"><span class="ck"></span></div>
<div class="c" style="left:53px;width:130px;"><p style="color:#f26a1b;padding-left:5px">临</p></div>
<div class="c" style="left:183px;width:100px;"><p class="l">WT-YCLDL-20260120-0002</p></div>
<div class="c" style="left:283px;width:100px;"><p class="l">BG-PHZ-20260120-0001-29</p></div>
<div class="c" style="left:383px;width:100px;"><p>管理员</p></div>
<div class="c" style="left:483px;width:100px;"></div>
<div class="c" style="left:583px;width:100px;"><p style="white-space:nowrap">2024委托单位</p></div>
<div class="c" style="left:683px;width:100px;"><p class="l">ybhx01</p></div>
<div class="c" style="left:783px;width:100px;"><p class="l">YP-ph-20260120-0001</p></div>
<div class="c" style="left:883px;width:100px;"><p>水</p></div>
<div class="c" style="left:983px;width:69px;"><p>未签章</p></div>
<div class="c" style="left:1052px;width:100px;"><p>xxxxxx检测中心</p></div>
<div class="c" style="left:1152px;width:100px;"></div>
<div class="c" style="left:1252px;width:100px;"><p>待打印</p></div>
<div class="c" style="left:1352px;width:80px;"><p class="l">2026-02-02</p></div>
<div class="c" style="left:1432px;width:100px;"><p class="l">0</p></div>
<div class="c" style="left:1532px;width:100px;"><p>CMA;CNAS;<br>公路综合</p></div>
<div class="c" style="left:1632px;width:100px;"><p style="white-space:nowrap">CMA;CNAS;<br><span class="lnk">资质认定</span></p></div>
</div>
<div class="vs"><i></i></div>
<div class="hs"><i></i></div>
<div class="pg">
<div class="sel">10<svg style="left:34px;top:7px" width="10" height="8" viewBox="0 0 10 8"><path d="M1 1.6 L5 5.8 L9 1.6" fill="none" stroke="#222" stroke-width="1.9"/></svg></div>
<div class="sp" style="left:67px"></div>
<svg style="left:78px;top:12px" width="12" height="12" viewBox="0 0 12 12"><rect x="1.6" y="1" width="2" height="10" fill="#8d8d8d"/><path d="M10.4 1 V11 L4.4 6 Z" fill="#8d8d8d"/></svg>
<svg style="left:110px;top:12px" width="12" height="12" viewBox="0 0 12 12"><path d="M9 1 V11 L3 6 Z" fill="#8d8d8d"/></svg>
<div class="sp" style="left:131px"></div>
<div class="inp">1</div>
<div class="tx" style="left:186px">/ 13</div>
<div class="sp" style="left:220px"></div>
<svg style="left:232px;top:12px" width="12" height="12" viewBox="0 0 12 12"><path d="M3 1 V11 L9 6 Z" fill="#111"/></svg>
<svg style="left:261px;top:12px" width="12" height="12" viewBox="0 0 12 12"><path d="M1.6 1 V11 L7.6 6 Z" fill="#111"/><rect x="8.4" y="1" width="2" height="10" fill="#111"/></svg>
<div class="sp" style="left:284px"></div>
<svg style="left:295px;top:11px" width="14" height="14" viewBox="0 0 14 14"><path d="M11.8 7.4 A4.8 4.8 0 1 1 9.6 3.2" fill="none" stroke="#222" stroke-width="1.5"/><path d="M7.8 0.6 L11.6 2.8 L8.2 5.2 Z" fill="#222"/></svg>
<div class="tx" style="right:9px"><span style="font-size:15px">1 - 10</span> 共 <span style="font-size:15px">123</span> 条</div>
</div></div>
</div>
<div class="chat"><svg width="24" height="24" viewBox="0 0 24 24"><path d="M2 2 H22 V18 H7 L2 22 Z" fill="none" stroke="#fff" stroke-width="2.4" stroke-linejoin="miter"/><path d="M7 8 H17 M7 12.4 H13" stroke="#fff" stroke-width="2.2"/></svg><span style="top:56px">在</span><span style="top:78px">线</span><span style="top:100px">交</span><span style="top:122px">谈</span></div>
<div style="position:absolute;left:180px;top:908.5px;width:1740px;height:8px;background:#fdfdfe"></div>
<div class="foot"><span style="left:861px">系统插件下载</span><span style="left:948px">ukey锁签名插件下载</span></div>
</div></body></html>
